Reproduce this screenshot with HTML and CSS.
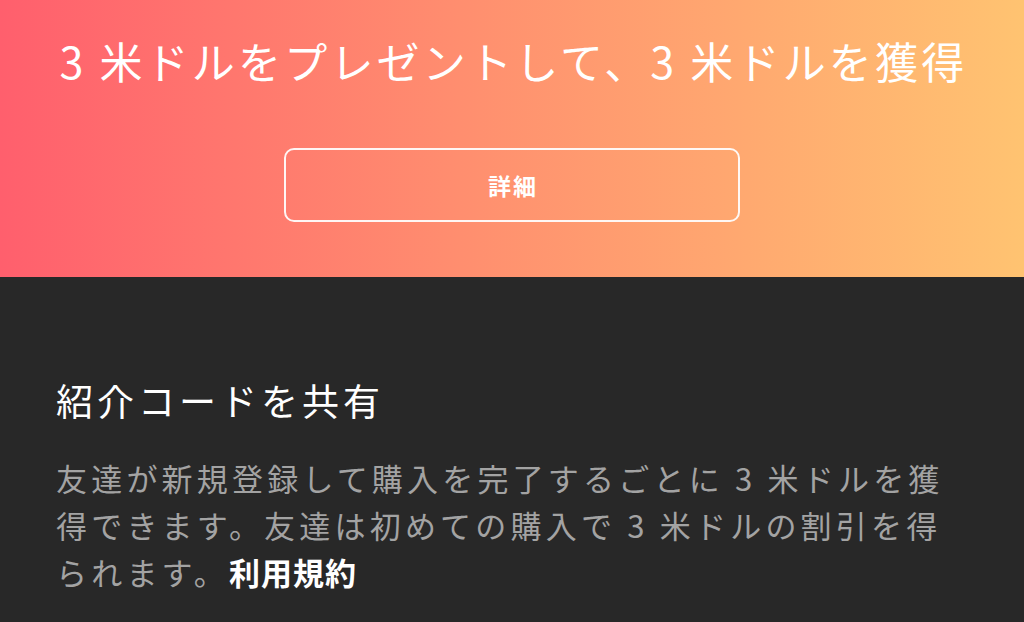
FILE: index.html
```html
<!DOCTYPE html>
<html lang="ja">
<head>
<meta charset="utf-8">
<title>紹介</title>
<link rel="stylesheet" href="styles.css">
</head>
<body>
<div class="page">
  <header class="hero">
    <h1 class="hero-title">3 米ドルをプレゼントして、3 米ドルを獲得</h1>
    <button class="hero-btn">詳細</button>
  </header>
  <section class="share">
    <h2 class="share-title">紹介コードを共有</h2>
    <p class="share-text">友達が新規登録して購入を完了するごとに 3 米ドルを獲得できます。友達は初めての購入で 3 米ドルの割引を得られます。<a class="terms">利用規約</a></p>
  </section>
</div>
</body>
</html>
```

FILE: styles.css
```css
* { box-sizing: border-box; }
html, body {
  margin: 0;
  padding: 0;
  width: 1024px;
  height: 622px;
  overflow: hidden;
  background: #282828;
  font-family: "Noto Sans CJK JP", "Noto Sans", sans-serif;
}
.page {
  display: flex;
  flex-direction: column;
  height: 622px;
}
.hero {
  height: 277px;
  background: linear-gradient(90deg, #ff5f6d 0%, #ff8e6f 45%, #ffc371 100%);
  display: flex;
  flex-direction: column;
  align-items: center;
  padding-top: 30px;
}
.hero-title {
  margin: 0;
  font-size: 43px;
  line-height: 60px;
  font-weight: 400;
  letter-spacing: 3.2px;
  color: #fff;
  white-space: nowrap;
  padding-left: 3px;
}
.hero-btn {
  margin-top: 58px;
  width: 456px;
  height: 74px;
  border: 2px solid rgba(255, 255, 255, 0.92);
  border-radius: 10px;
  background: transparent;
  color: #fff;
  font-family: inherit;
  font-size: 23px;
  font-weight: 700;
  letter-spacing: 2px;
  padding: 0;
  padding-left: 2px;
}
.share {
  flex: 1;
  background: #282828;
  padding: 99px 0 0 56px;
}
.share-title {
  margin: 0;
  font-size: 37px;
  line-height: 48px;
  font-weight: 400;
  letter-spacing: 4px;
  color: #fff;
}
.share-text {
  margin: 30px 0 0 0;
  width: 900px;
  font-size: 31px;
  line-height: 47px;
  letter-spacing: 4.2px;
  color: #a3a3a3;
}
.terms {
  display: inline-block;
  line-height: 47px;
  color: #fff;
  font-weight: 700;
  letter-spacing: 1px;
}
```
